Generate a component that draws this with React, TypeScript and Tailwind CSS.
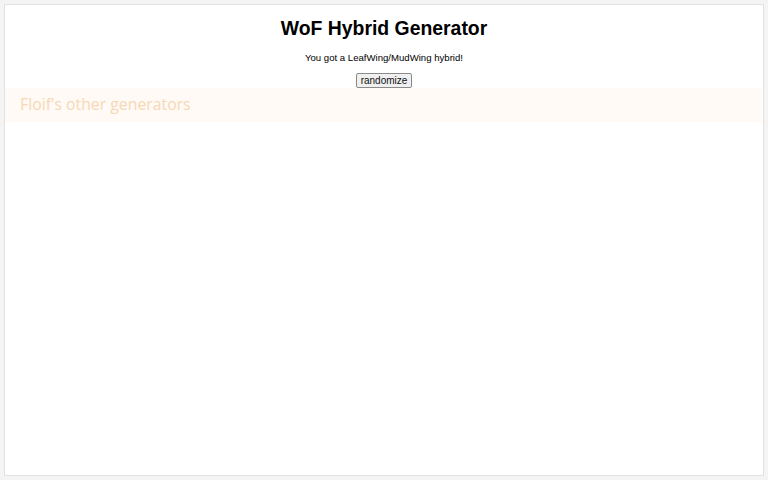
import React from 'react';

export default function App() {
  return (
    <div className="h-[480px] w-[768px] bg-[#f4f4f4] p-[4px]">
      <div className="flex h-[472px] flex-col border border-[#e2e2e2] bg-white font-['Liberation_Sans',Arial,sans-serif] text-black">
        {/* Generator */}
        <h1 className="mt-[11px] text-center text-[19.4px] font-bold leading-[24px]">WoF Hybrid Generator</h1>
        <p className="mt-[12px] text-center text-[9.6px] leading-[12px]">You got a LeafWing/MudWing hybrid!</p>
        <div className="mt-[9px] flex justify-center">
          <button className="h-[15px] rounded-[2px] border border-[#8a8a8a] bg-[#f0f0f0] px-[4px] text-[10px] leading-[12px] text-[#111]">
            randomize
          </button>
        </div>

        {/* Footer links */}
        <div className="mr-[1px] flex h-[34px] items-center bg-[#fffaf5] px-[15px]">
          <span className="font-['Open_Sans',sans-serif] text-[15.8px] text-[#f6d8b6]">Floif's other generators</span>
        </div>
      </div>
    </div>
  );
}
